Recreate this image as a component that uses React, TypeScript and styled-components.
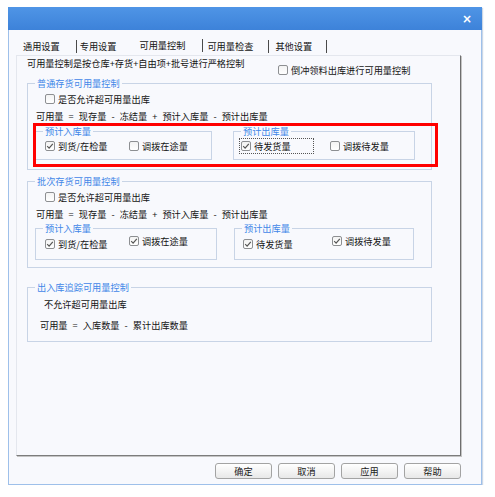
import React from "react";
import styled, { createGlobalStyle, css } from "styled-components";

const FONT = `"Noto Sans CJK SC", "Noto Sans", sans-serif`;

const Global = createGlobalStyle`
  html, body { margin: 0; padding: 0; background: #ffffff; }
  body { font-family: ${FONT}; font-size: 9.2px; color: #141414; }
  * { box-sizing: border-box; }
`;

const Window = styled.div`
  margin: 7px 0 0 8px;
  width: 474px;
  height: 478px;
  border: 1px solid #9ec0ea;
  border-top: none;
  background: #f8f9fd;
  display: flex;
  flex-direction: column;
  box-shadow: 1px 1px 1px rgba(110, 140, 180, 0.35);
`;

const TitleBar = styled.div`
  height: 23px;
  margin: 0 -1px;
  background: linear-gradient(#4f95e6, #3d82d9);
  display: flex;
  align-items: center;
  justify-content: flex-end;
  padding-right: 10px;
`;

const Close = styled.span`
  color: #ffffff;
  font-family: "DejaVu Sans", sans-serif;
  font-weight: bold;
  font-size: 12px;
  line-height: 12px;
`;

const TabStrip = styled.div`
  height: 25px;
  display: flex;
  align-items: flex-start;
  padding: 10px 0 0 7px;
`;

const Tab = styled.div<{ $pl: number; $pr: number; $sep?: boolean; $active?: boolean }>`
  height: 13px;
  line-height: 12px;
  padding: 0 ${(p) => p.$pr}px 0 ${(p) => p.$pl}px;
  white-space: nowrap;
  border-right: 1px solid ${(p) => (p.$sep ? "#4a4a4a" : "transparent")};
  ${(p) =>
    p.$active &&
    css`
      margin-top: -1px;
      color: #111;
    `}
`;

const Panel = styled.div`
  margin-left: 7px;
  width: 445px;
  height: 401px;
  border: 1px solid #e4e7ee;
  border-right-color: #6e6e6e;
  border-bottom-color: #7c7c7c;
  box-shadow: 1px 1px 0 #c4c4c4;
  padding-left: 10px;
`;

const TopRow = styled.div`
  display: grid;
  grid-template-columns: 251px auto;
  height: 20px;
`;

const Line = styled.div<{ $mt: number; $ml: number }>`
  margin: ${(p) => p.$mt}px 0 0 ${(p) => p.$ml}px;
  line-height: 12px;
  height: 12px;
  white-space: nowrap;
  word-spacing: 3px;
`;

const Group = styled.fieldset<{ $w: number; $mt: number; $pb: number }>`
  margin: ${(p) => p.$mt}px 0 0 0;
  padding: 0 0 ${(p) => p.$pb}px 0;
  width: ${(p) => p.$w}px;
  min-width: 0;
  border: 1px solid #c8d4e6;
`;

const Legend = styled.legend`
  margin-left: 7px;
  padding: 0 2px;
  height: 12px;
  line-height: 12px;
  color: #4287e8;
  font-size: 9.2px;
`;

const InnerRow = styled.div<{ $mt: number; $gap: number; $mark?: boolean }>`
  position: relative;
  display: flex;
  align-items: flex-start;
  gap: ${(p) => p.$gap}px;
  margin: ${(p) => p.$mt}px 0 0 7px;
  ${(p) =>
    p.$mark &&
    css`
      /* red call-out frame drawn over both quantity groups */
      &::after {
        content: "";
        position: absolute;
        left: -2px;
        top: -2px;
        right: -7px;
        bottom: -7px;
        border: 3px solid #ff0000;
        pointer-events: none;
      }
    `}
`;

const ChecksRow = styled.div<{ $ml: number }>`
  display: flex;
  align-items: flex-start;
  margin-left: ${(p) => p.$ml}px;
`;

const CheckItem = styled.label<{ $w?: number; $mr?: number; $mt: number; $focus?: boolean }>`
  display: inline-flex;
  align-items: center;
  gap: 3px;
  height: 12px;
  line-height: 12px;
  margin-top: ${(p) => p.$mt}px;
  margin-right: ${(p) => p.$mr ?? 0}px;
  white-space: nowrap;
  ${(p) => p.$w && css`width: ${p.$w}px;`}
  ${(p) =>
    p.$focus &&
    css`
      outline: 1px dotted #555;
      outline-offset: 1px;
    `}
`;

const Box = styled.span`
  width: 10px;
  height: 10px;
  border: 1px solid #8d8f92;
  border-radius: 2px;
  background: linear-gradient(#f3f3f3, #ffffff);
  display: inline-flex;
  align-items: center;
  justify-content: center;
  flex: none;
`;

const Check: React.FC<{
  label: string;
  checked?: boolean;
  w?: number;
  mr?: number;
  mt?: number;
  focus?: boolean;
}> = ({ label, checked, w, mr, mt = 0, focus }) => (
  <CheckItem $w={w} $mr={mr} $mt={mt} $focus={focus}>
    <Box>
      {checked && (
        <svg width="8" height="8" viewBox="0 0 8 8">
          <path d="M1.2 4.2 L3.1 6.1 L6.8 1.8" fill="none" stroke="#555" strokeWidth="1.2" />
        </svg>
      )}
    </Box>
    <span>{label}</span>
  </CheckItem>
);

const Footer = styled.div`
  display: flex;
  justify-content: flex-end;
  gap: 6px;
  margin-top: 7px;
  padding-right: 20px;
`;

const Button = styled.button`
  width: 57px;
  height: 16px;
  padding: 0;
  border: 1px solid #a3a3a3;
  border-radius: 3px;
  background: linear-gradient(#ffffff, #e8e8e8);
  font-family: ${FONT};
  font-size: 9.2px;
  line-height: 12px;
  color: #1a1a1a;
`;

export default function App() {
  return (
    <>
      <Global />
      <Window>
        <TitleBar>
          <Close>×</Close>
        </TitleBar>
        <TabStrip>
          <Tab $pl={7} $pr={16} $sep>通用设置</Tab>
          <Tab $pl={3} $pr={12}>专用设置</Tab>
          <Tab $pl={10} $pr={17} $sep $active>可用量控制</Tab>
          <Tab $pl={4} $pr={15} $sep>可用量检查</Tab>
          <Tab $pl={6} $pr={14} $sep>其他设置</Tab>
        </TabStrip>
        <Panel>
          <TopRow>
            <Line $mt={1} $ml={0}>可用量控制是按仓库+存货+自由项+批号进行严格控制</Line>
            <Line $mt={8} $ml={0}>
              <Check label="倒冲领料出库进行可用量控制" />
            </Line>
          </TopRow>

          <Group $w={405} $mt={1} $pb={9}>
            <Legend>普通存货可用量控制</Legend>
            <Line $mt={4} $ml={17}>
              <Check label="是否允许超可用量出库" />
            </Line>
            <Line $mt={5} $ml={8}>可用量 = 现存量 - 冻结量 + 预计入库量 - 预计出库量</Line>
            <InnerRow $mt={3} $gap={21} $mark>
              <Group $w={177} $mt={0} $pb={7}>
                <Legend>预计入库量</Legend>
                <ChecksRow $ml={9}>
                  <Check label="到货/在检量" checked w={84} mt={3} />
                  <Check label="调拨在途量" mt={3} />
                </ChecksRow>
              </Group>
              <Group $w={182} $mt={0} $pb={7}>
                <Legend>预计出库量</Legend>
                <ChecksRow $ml={7}>
                  <Check label="待发货量" checked w={71} mr={18} mt={3} focus />
                  <Check label="调拨待发量" mt={3} />
                </ChecksRow>
              </Group>
            </InnerRow>
          </Group>

          <Group $w={405} $mt={5} $pb={7}>
            <Legend>批次存货可用量控制</Legend>
            <Line $mt={4} $ml={17}>
              <Check label="是否允许超可用量出库" />
            </Line>
            <Line $mt={5} $ml={8}>可用量 = 现存量 - 冻结量 + 预计入库量 - 预计出库量</Line>
            <InnerRow $mt={2} $gap={17}>
              <Group $w={182} $mt={0} $pb={9}>
                <Legend>预计入库量</Legend>
                <ChecksRow $ml={9}>
                  <Check label="到货/在检量" checked w={84} mt={4} />
                  <Check label="调拨在途量" checked mt={1} />
                </ChecksRow>
              </Group>
              <Group $w={180} $mt={0} $pb={9}>
                <Legend>预计出库量</Legend>
                <ChecksRow $ml={8}>
                  <Check label="待发货量" checked w={89} mt={4} />
                  <Check label="调拨待发量" checked mt={1} />
                </ChecksRow>
              </Group>
            </InnerRow>
          </Group>

          <Group $w={405} $mt={13} $pb={10}>
            <Legend>出入库追踪可用量控制</Legend>
            <Line $mt={5} $ml={16}>不允许超可用量出库</Line>
            <Line $mt={9} $ml={12}>可用量 = 入库数量 - 累计出库数量</Line>
          </Group>
        </Panel>
        <Footer>
          <Button>确定</Button>
          <Button>取消</Button>
          <Button>应用</Button>
          <Button>帮助</Button>
        </Footer>
      </Window>
    </>
  );
}
